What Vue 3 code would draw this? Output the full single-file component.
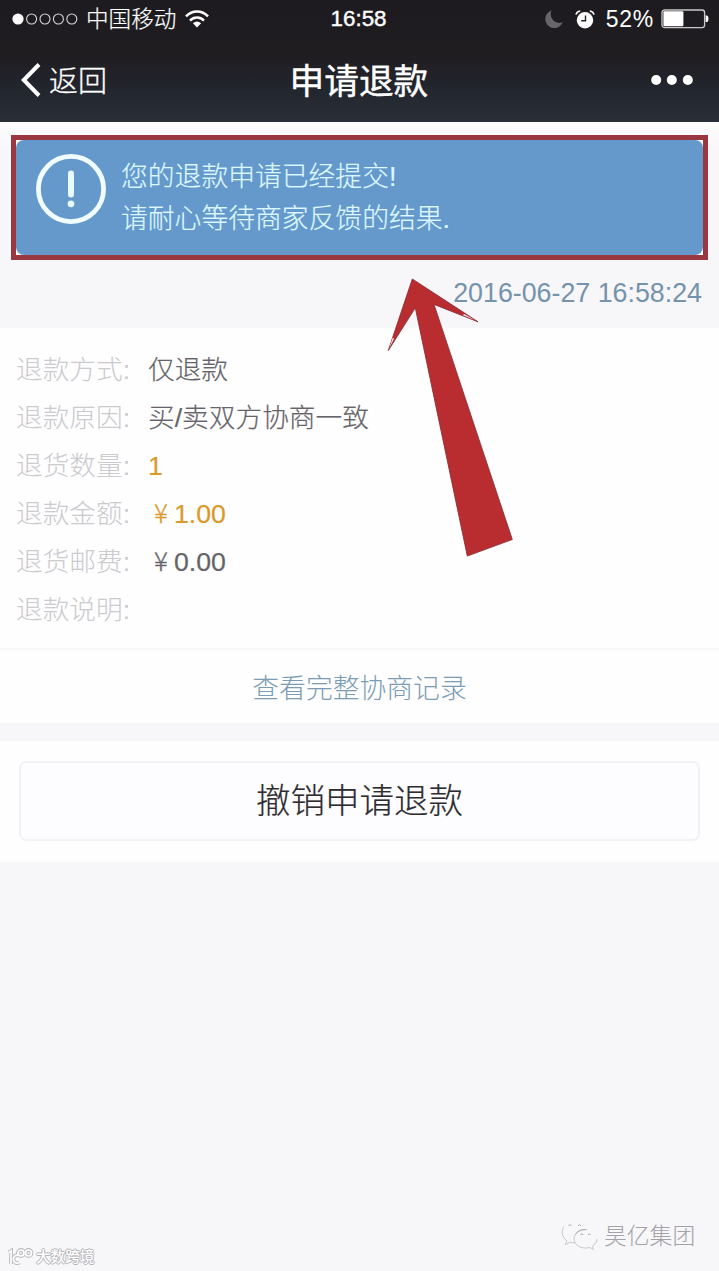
<script setup>
const rows = [
  { label: '退款方式:', value: '仅退款' },
  { label: '退款原因:', value: '买/卖双方协商一致' },
  { label: '退货数量:', value: '1', tone: 'gold' },
  { label: '退款金额:', amount: '1.00', tone: 'gold' },
  { label: '退货邮费:', amount: '0.00' },
  { label: '退款说明:', value: '' },
]
</script>

<template>
  <div class="screen">
    <header class="top">
      <div class="status">
        <div class="status-left">
          <svg class="signal" width="66" height="14" viewBox="0 0 66 14">
            <circle cx="6" cy="7" r="5.6" fill="#fff" />
            <g fill="none" stroke="#d8d8da" stroke-width="1.1">
              <circle cx="19.6" cy="7" r="5" />
              <circle cx="33" cy="7" r="5" />
              <circle cx="46.4" cy="7" r="5" />
              <circle cx="59.8" cy="7" r="5" />
            </g>
          </svg>
          <span class="carrier">中国移动</span>
          <svg class="wifi" width="24" height="18" viewBox="0 0 24 18">
            <g fill="none" stroke="#fff" stroke-width="2.5">
              <path d="M1 6.4C7.2-.2 16.8-.2 23 6.4" />
              <path d="M5 10.6C8.9 6.5 15.1 6.5 19 10.6" />
            </g>
            <path d="M12 17.4 7.9 13.3Q12 9.6 16.1 13.3Z" fill="#fff" />
          </svg>
        </div>
        <span class="time">16:58</span>
        <div class="status-right">
          <svg class="moon" width="18" height="18" viewBox="0 0 18 18">
            <path d="M6.5.5A9 9 0 1 0 17.7 12.3 8.8 8.8 0 0 1 6.5.5Z" fill="#66656a" />
          </svg>
          <svg class="alarm" width="20" height="19" viewBox="0 0 20 19">
            <circle cx="10" cy="10.3" r="8.2" fill="#fff" />
            <path d="M1 4.6Q1.8 1.4 5.2 1M19 4.6Q18.2 1.4 14.8 1" fill="none" stroke="#fff" stroke-width="1.5" />
            <path d="M10.5 5.4V10.8H6.2" fill="none" stroke="#242328" stroke-width="1.4" />
          </svg>
          <span class="percent">52%</span>
          <svg class="battery" width="48" height="20" viewBox="0 0 48 20">
            <rect x="1" y="1" width="42.6" height="17.6" rx="2.6" fill="none" stroke="#c9c9cb" stroke-width="1.3" />
            <rect x="2.4" y="2.3" width="20" height="15" rx="1" fill="#fff" />
            <path d="M44.6 6.6h1.2q1.6 0 1.6 3.2t-1.6 3.2h-1.2z" fill="#fff" />
          </svg>
        </div>
      </div>
      <nav class="nav">
        <div class="back">
          <svg width="20" height="34" viewBox="0 0 20 34">
            <path d="M18 1.5 2.8 17 18 32.5" fill="none" stroke="#fff" stroke-width="4" />
          </svg>
          <span>返回</span>
        </div>
        <h1>申请退款</h1>
        <svg class="more" width="42" height="12" viewBox="0 0 42 12" fill="#fff">
          <circle cx="5.2" cy="6" r="5" />
          <circle cx="20.8" cy="6" r="5" />
          <circle cx="36.8" cy="6" r="5" />
        </svg>
      </nav>
    </header>

    <section class="notice-area">
      <div class="frame">
        <div class="notice">
          <svg width="72" height="72" viewBox="0 0 72 72">
            <circle cx="36" cy="36" r="32.6" fill="none" stroke="#f0fcff" stroke-width="4.8" />
            <rect x="33" y="17.5" width="6" height="27" rx="3" fill="#e8fbff" />
            <circle cx="36" cy="50.8" r="3.4" fill="#e8fbff" />
          </svg>
          <p>您的退款申请已经提交!<br />请耐心等待商家反馈的结果.</p>
        </div>
      </div>
      <time class="date">2016-06-27 16:58:24</time>
    </section>

    <section class="details">
      <div v-for="row in rows" :key="row.label" class="row">
        <span class="label">{{ row.label }}</span>
        <span class="value" :class="row.tone">
          <template v-if="row.amount"><i class="yen">¥</i>{{ row.amount }}</template>
          <template v-else>{{ row.value }}</template>
        </span>
      </div>
    </section>
    <a class="history">查看完整协商记录</a>

    <section class="action">
      <button class="cancel">撤销申请退款</button>
    </section>

    <svg class="arrow" width="130" height="282" viewBox="385 276 130 282">
      <path d="M412.3 279 478 321.8 434 304.4 512.3 539.5 467.3 556 415.3 307.8 388.3 350.5Z" fill="#b92c30" stroke="#8c3038" stroke-width=".9" />
      <path d="M475 320 464 314 463 315.2ZM389.500 348 394 338.600 392.600 338Z" fill="#f4eff1" />
    </svg>

    <div class="mark-right">
      <svg width="38" height="30" viewBox="0 0 38 30" fill="#fbfafc" stroke="#c8c7cb" stroke-width="1">
        <path d="M3 5.500C.2 9 .4 16 5.800 19.800L4.400 23.600 9 21.200c1.600.5 3.200.7 5 .7" fill="none" />
        <path d="M24.500 8.500C18 8.500 13 12.600 13 17.800s5 9.200 11.500 9.200c1.500 0 2.800-.2 4-.6l4 2-1-3.300c2.700-1.700 4.500-4.300 4.500-7.300" fill="none" />
        <path d="M14.500 13.500C16.500 10 20.500 8.200 25.500 8.500" fill="none" stroke="#aaa9ae" />
        <path d="m7.500 5 1.500-1.500L10.500 5M17 5 18.500 3.500 20 5M19.500 14l1.300-1.300L22 14M27 14l1.300-1.300L29.500 14" fill="none" stroke="#aaa9ae" />
      </svg>
      <span>昊亿集团</span>
    </div>
    <div class="mark-left">
      <svg width="27" height="19" viewBox="0 0 27 19" fill="none">
        <g stroke="#bdbcc0" stroke-width="3.800">
          <path d="M2 4.500 4 3V16M12 7.500A4 4 0 1 0 12.500 14.500" />
          <circle cx="14" cy="5" r="3" />
          <circle cx="21.500" cy="5" r="3" />
        </g>
        <g stroke="#fff" stroke-width="1.700">
          <path d="M2 4.500 4 3V16M12 7.500A4 4 0 1 0 12.500 14.500" />
          <circle cx="14" cy="5" r="3" />
          <circle cx="21.500" cy="5" r="3" />
        </g>
      </svg>
      <span>大数跨境</span>
    </div>
  </div>
</template>

<style>
body {
  margin: 0;
}
</style>

<style scoped>
.screen {
  position: relative;
  width: 719px;
  height: 1271px;
  overflow: hidden;
  background: #f7f6f9;
  font-family: "Liberation Sans", "Noto Sans CJK SC", sans-serif;
  font-weight: 300;
}
.top {
  height: 122px;
  color: #fff;
  background: linear-gradient(#1d1b1f 0, #201d21 45%, #232831 80%, #292f37 100%);
}
.status {
  display: grid;
  grid-template-columns: 1fr 58px 1fr;
  align-items: center;
  height: 38px;
}
.status-left,
.status-right {
  display: flex;
  align-items: center;
}
.status-left {
  padding-left: 12px;
}
.carrier {
  margin-left: 8px;
  padding-top: 2px;
  font-size: 22.6px;
  line-height: 30px;
  -webkit-text-stroke: 0.2px #fff;
}
.wifi {
  margin-left: 9px;
}
.time {
  font-size: 22.4px;
  white-space: nowrap;
  -webkit-text-stroke: 0.4px #fff;
}
.status-right {
  justify-content: flex-end;
  padding-right: 10px;
}
.alarm {
  margin-left: 12px;
}
.percent {
  margin-left: 11px;
  font-size: 23px;
  letter-spacing: 0.7px;
}
.battery {
  margin-left: 7px;
}
.nav {
  display: grid;
  grid-template-columns: 1fr 140px 1fr;
  align-items: center;
  height: 84px;
}
.back {
  display: flex;
  align-items: center;
  gap: 8px;
  padding-left: 21px;
  font-size: 29px;
  line-height: 40px;
  -webkit-text-stroke: 0.3px #fff;
}
.back span {
  padding-top: 3px;
}
.nav h1 {
  margin: 0;
  padding-top: 3px;
  font-size: 34.7px;
  font-weight: 400;
  line-height: 46px;
  white-space: nowrap;
  -webkit-text-stroke: 0.4px #fff;
}
.more {
  justify-self: end;
  margin-right: 26px;
}
.notice-area {
  display: flex;
  flex-direction: column;
  box-sizing: border-box;
  height: 206px;
  padding: 13px 11px 0;
  background: linear-gradient(#fdfdfe 0, #f7f6f9 30px);
}
.frame {
  height: 115px;
  border: 5px solid #9a3842;
  background: #fff;
}
.notice {
  display: flex;
  align-items: flex-start;
  gap: 14px;
  box-sizing: border-box;
  height: 115px;
  padding: 13px 0 0 19px;
  border-radius: 8px;
  background: #6599cc;
}
.notice p {
  margin: 3px 0 0;
  color: #dcf8ff;
  font-size: 26.8px;
  line-height: 42px;
  -webkit-text-stroke: 0.2px #dcf8ff;
}
.date {
  align-self: flex-end;
  margin: 18px 6px 0 0;
  color: #7593ab;
  font-size: 26.8px;
  line-height: 30px;
}
.details {
  box-sizing: border-box;
  height: 322px;
  padding: 18px 17px 0;
  border-bottom: 2px solid #f7f6f9;
  background: #fefefe;
}
.row {
  display: flex;
  height: 48px;
  font-size: 26.7px;
  line-height: 48px;
  white-space: nowrap;
}
.label {
  width: 131px;
  margin-left: -1px;
  margin-right: 1px;
  color: #cbcacf;
}
.value {
  color: #66646a;
  -webkit-text-stroke: 0.2px currentColor;
}
.value.gold {
  color: #d99a2b;
}
.yen {
  display: inline-block;
  width: 26px;
  box-sizing: border-box;
  font-family: "Noto Sans CJK SC", sans-serif;
  font-size: 26px;
  font-style: normal;
  line-height: 40px;
  text-align: center;
  -webkit-text-stroke: 0.3px currentColor;
}
.history {
  display: block;
  height: 73px;
  color: #7b9cb4;
  background: #fefefe;
  font-size: 26.8px;
  line-height: 78px;
  text-align: center;
}
.action {
  box-sizing: border-box;
  height: 121px;
  margin-top: 18px;
  padding: 20px 19px;
  background: #fefefe;
}
.cancel {
  display: block;
  box-sizing: border-box;
  width: 681px;
  height: 80px;
  padding: 0;
  border: 2px solid #f4f1f6;
  border-radius: 7px;
  color: #2e2c31;
  background: #fdfcfe;
  font: inherit;
  font-size: 34.5px;
  line-height: 76px;
  -webkit-text-stroke: 0.2px #2e2c31;
}
.arrow {
  position: absolute;
  left: 385px;
  top: 276px;
}
.mark-right,
.mark-left {
  position: absolute;
  display: flex;
  align-items: center;
}
.mark-right {
  left: 561px;
  top: 1219px;
  gap: 5px;
  color: #a3a2a7;
  font-size: 22.8px;
  line-height: 34px;
}
.mark-left {
  left: 7px;
  top: 1247px;
  gap: 2px;
  color: #fff;
  font-size: 14.6px;
  font-weight: 500;
  line-height: 20px;
  text-shadow: 1px 0 #b5b4b8, -1px 0 #b5b4b8, 0 1px #b5b4b8, 0 -1px #b5b4b8;
}
</style>
